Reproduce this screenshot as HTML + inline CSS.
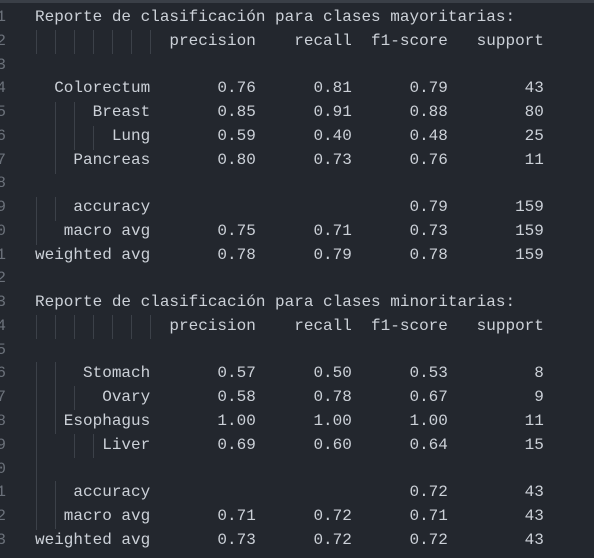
<!DOCTYPE html>
<html><head><meta charset="utf-8"><style>
html,body{margin:0;padding:0;background:#23272e;width:594px;height:558px;overflow:hidden}
.top{position:absolute;left:0;top:0;width:594px;height:3px;background:#3a3f47}
pre{position:absolute;left:35px;top:6px;margin:0;font-family:"Liberation Mono",monospace;font-size:16px;line-height:23.77px;color:#ccd1d8}
.nums{position:absolute;right:588px;top:6px;margin:0;font-family:"Liberation Mono",monospace;font-size:16px;line-height:23.77px;color:#6b717a;text-align:right}
.g{position:absolute;width:1px;background:#3c4149}
</style></head><body>
<div class="top"></div>
<pre class="nums" style="left:auto">1
2
3
4
5
6
7
8
9
0
1
2
3
4
5
6
7
8
9
0
1
2
3</pre>
<div class="g" style="left:36px;top:30px;height:24px"></div>
<div class="g" style="left:55px;top:30px;height:24px"></div>
<div class="g" style="left:74px;top:30px;height:24px"></div>
<div class="g" style="left:93px;top:30px;height:24px"></div>
<div class="g" style="left:112px;top:30px;height:24px"></div>
<div class="g" style="left:131px;top:30px;height:24px"></div>
<div class="g" style="left:150px;top:30px;height:24px"></div>
<div class="g" style="left:55px;top:102px;height:72px"></div>
<div class="g" style="left:74px;top:102px;height:48px"></div>
<div class="g" style="left:93px;top:126px;height:24px"></div>
<div class="g" style="left:36px;top:197px;height:48px"></div>
<div class="g" style="left:55px;top:197px;height:24px"></div>
<div class="g" style="left:36px;top:315px;height:24px"></div>
<div class="g" style="left:55px;top:315px;height:24px"></div>
<div class="g" style="left:74px;top:315px;height:24px"></div>
<div class="g" style="left:93px;top:315px;height:24px"></div>
<div class="g" style="left:112px;top:315px;height:24px"></div>
<div class="g" style="left:131px;top:315px;height:24px"></div>
<div class="g" style="left:150px;top:315px;height:24px"></div>
<div class="g" style="left:36px;top:362px;height:168px"></div>
<div class="g" style="left:55px;top:362px;height:24px"></div>
<div class="g" style="left:55px;top:386px;height:48px"></div>
<div class="g" style="left:74px;top:386px;height:24px"></div>
<div class="g" style="left:74px;top:434px;height:24px"></div>
<div class="g" style="left:93px;top:434px;height:24px"></div>
<div class="g" style="left:55px;top:481px;height:48px"></div>
<pre>Reporte de clasificación para clases mayoritarias:
              precision    recall  f1-score   support

  Colorectum       0.76      0.81      0.79        43
      Breast       0.85      0.91      0.88        80
        Lung       0.59      0.40      0.48        25
    Pancreas       0.80      0.73      0.76        11

    accuracy                           0.79       159
   macro avg       0.75      0.71      0.73       159
weighted avg       0.78      0.79      0.78       159

Reporte de clasificación para clases minoritarias:
              precision    recall  f1-score   support

     Stomach       0.57      0.50      0.53         8
       Ovary       0.58      0.78      0.67         9
   Esophagus       1.00      1.00      1.00        11
       Liver       0.69      0.60      0.64        15

    accuracy                           0.72        43
   macro avg       0.71      0.72      0.71        43
weighted avg       0.73      0.72      0.72        43</pre>
</body></html>
